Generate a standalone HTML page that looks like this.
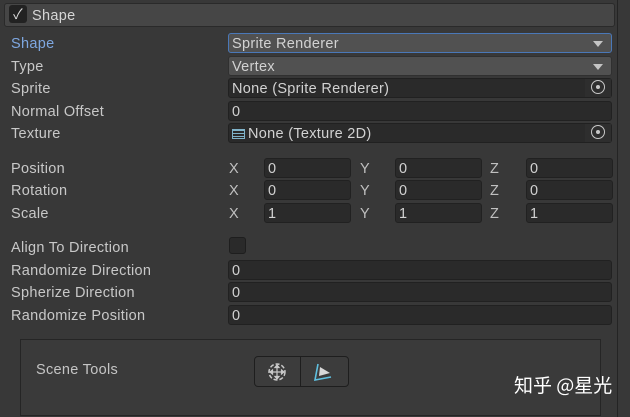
<!DOCTYPE html><html><head><style>
body{margin:0;width:630px;height:417px;background:#383838;font-family:"Liberation Sans","Noto Sans CJK SC",sans-serif;font-size:14.5px;color:#c8c8c8;position:relative;overflow:hidden;letter-spacing:0.3px}
.a{position:absolute}
.l{position:absolute;left:11px;line-height:22px}
.f{position:absolute;background:#2a2a2a;border:1px solid #212121;border-radius:3px;box-sizing:border-box;height:20px;line-height:20px;padding-left:3px;color:#d2d2d2}
.d{background:#515151;border-color:#303030}
.x{position:absolute;line-height:22px;color:#c0c0c0}
.tri{position:absolute;right:8px;top:7px;width:0;height:0;border-left:5px solid transparent;border-right:5px solid transparent;border-top:6px solid #c4c4c4}
.o{position:absolute;right:0;top:0;width:26px;height:18px;background:#2e2e2e}
.o:after{content:"";position:absolute;left:6px;top:1px;width:12px;height:12px;border:1.6px solid #c8c8c8;border-radius:50%}
.o:before{content:"";position:absolute;left:11px;top:6px;width:4px;height:4px;background:#c8c8c8;border-radius:50%}
</style></head><body>
<div class="a" style="left:0;top:0;width:617px;height:417px;border-right:1px solid #242424"></div>
<div class="a" style="left:4px;top:3px;width:611px;height:24px;background:#464646;border:1px solid #2a2a2a;border-radius:3px;box-sizing:border-box"></div>
<div class="a" style="left:9px;top:5px;width:18px;height:18px;background:#222;border-radius:3px;color:#ddd;font-size:14px;line-height:18px;text-align:center">✓</div>
<div class="a" style="left:32px;top:5px;line-height:22px;color:#d6d6d6">Shape</div>
<div class="l" style="top:33px;color:#7ea7e0">Shape</div>
<div class="l" style="top:56px">Type</div>
<div class="l" style="top:78px">Sprite</div>
<div class="l" style="top:101px">Normal Offset</div>
<div class="l" style="top:123px">Texture</div>
<div class="f d" style="left:228px;top:33px;width:384px;border:1px solid #4a78b8">Sprite Renderer<div class="tri"></div></div>
<div class="f d" style="left:228px;top:56px;width:384px">Vertex<div class="tri"></div></div>
<div class="f" style="left:228px;top:78px;width:384px">None (Sprite Renderer)<div class="o"></div></div>
<div class="f" style="left:228px;top:101px;width:384px">0</div>
<div class="f" style="left:228px;top:123px;width:384px"><span style="display:inline-block;width:13px;height:10px;border:1px solid #7fb3c9;box-sizing:border-box;background:repeating-linear-gradient(#7fb3c9 0 1px,transparent 1px 3px);vertical-align:-1px;margin-right:3px"></span>None (Texture 2D)<div class="o"></div></div>
<div class="l" style="top:158px">Position</div>
<div class="l" style="top:180px">Rotation</div>
<div class="l" style="top:203px">Scale</div>
<div class="x" style="left:229px;top:158px">X</div><div class="x" style="left:360px;top:158px">Y</div><div class="x" style="left:490px;top:158px">Z</div>
<div class="x" style="left:229px;top:180px">X</div><div class="x" style="left:360px;top:180px">Y</div><div class="x" style="left:490px;top:180px">Z</div>
<div class="x" style="left:229px;top:203px">X</div><div class="x" style="left:360px;top:203px">Y</div><div class="x" style="left:490px;top:203px">Z</div>
<div class="f" style="left:264px;top:158px;width:87px">0</div><div class="f" style="left:395px;top:158px;width:87px">0</div><div class="f" style="left:526px;top:158px;width:87px">0</div>
<div class="f" style="left:264px;top:180px;width:87px">0</div><div class="f" style="left:395px;top:180px;width:87px">0</div><div class="f" style="left:526px;top:180px;width:87px">0</div>
<div class="f" style="left:264px;top:203px;width:87px">1</div><div class="f" style="left:395px;top:203px;width:87px">1</div><div class="f" style="left:526px;top:203px;width:87px">1</div>
<div class="l" style="top:237px">Align To Direction</div>
<div class="a" style="left:229px;top:237px;width:17px;height:17px;background:#2a2a2a;border:1px solid #1e1e1e;border-radius:3px;box-sizing:border-box"></div>
<div class="l" style="top:260px">Randomize Direction</div>
<div class="l" style="top:282px">Spherize Direction</div>
<div class="l" style="top:305px">Randomize Position</div>
<div class="f" style="left:228px;top:260px;width:384px">0</div>
<div class="f" style="left:228px;top:282px;width:384px">0</div>
<div class="f" style="left:228px;top:305px;width:384px">0</div>
<div class="a" style="left:20px;top:339px;width:581px;height:77px;border:1px solid #252525;box-sizing:border-box;background:#3a3a3a"></div>
<div class="a" style="left:36px;top:360px;line-height:20px;color:#c4c4c4">Scene Tools</div>
<div class="a" style="left:254px;top:356px;width:95px;height:31px;background:#3c3c3c;border:1px solid #1e1e1e;border-radius:4px;box-sizing:border-box"></div>
<div class="a" style="left:300px;top:357px;width:1px;height:29px;background:#1e1e1e"></div>
<svg class="a" style="left:264px;top:360px" width="26" height="24" viewBox="0 0 26 24"><circle cx="13" cy="12" r="8" fill="none" stroke="#c8c8c8" stroke-width="1.5" stroke-dasharray="4 2"/><path d="M13 6v12M7 12h12M13 5l-2 2.5h4zM13 19l-2-2.5h4zM6 12l2.5-2v4zM20 12l-2.5-2v4z" stroke="#c8c8c8" fill="#c8c8c8" stroke-width="1.2"/></svg>
<svg class="a" style="left:310px;top:360px" width="28" height="24" viewBox="0 0 28 24"><path d="M8 4L5 20L21 17" fill="none" stroke="#5fc0e0" stroke-width="1.6"/><path d="M10 7L20 13L9 16z" fill="#d8d8d8"/></svg>
<div class="a" style="left:514px;top:372px;font-size:19px;color:#fff;line-height:26px;font-family:'Noto Sans CJK SC',sans-serif;letter-spacing:0">知乎 @星光</div>
</body></html>
